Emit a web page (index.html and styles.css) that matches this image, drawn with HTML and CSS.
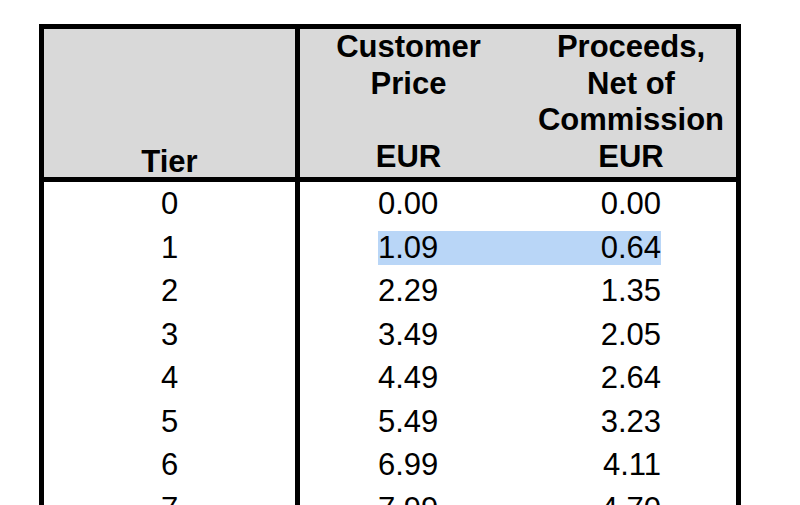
FILE: index.html
```html
<!DOCTYPE html>
<html>
<head>
<meta charset="utf-8">
<link rel="stylesheet" href="styles.css">
</head>
<body>
<div class="page">
<table class="tiers">
  <colgroup><col class="c1"><col class="c2"><col class="c3"></colgroup>
  <thead>
    <tr>
      <th class="tier-h">Tier</th>
      <th class="h2">Customer<br>Price<br><br>EUR</th>
      <th class="h3">Proceeds,<br>Net of<br>Commission<br>EUR</th>
    </tr>
  </thead>
  <tbody>
    <tr><td class="t">0</td><td class="p"><div class="v2">0.00</div></td><td class="n"><div class="v3">0.00</div></td></tr>
    <tr><td class="t">1</td><td class="p"><div class="v2 sel">1.09</div></td><td class="n"><div class="v3 sel">0.64</div></td></tr>
    <tr><td class="t">2</td><td class="p"><div class="v2">2.29</div></td><td class="n"><div class="v3">1.35</div></td></tr>
    <tr><td class="t">3</td><td class="p"><div class="v2">3.49</div></td><td class="n"><div class="v3">2.05</div></td></tr>
    <tr><td class="t">4</td><td class="p"><div class="v2">4.49</div></td><td class="n"><div class="v3">2.64</div></td></tr>
    <tr><td class="t">5</td><td class="p"><div class="v2">5.49</div></td><td class="n"><div class="v3">3.23</div></td></tr>
    <tr><td class="t">6</td><td class="p"><div class="v2">6.99</div></td><td class="n"><div class="v3">4.11</div></td></tr>
    <tr><td class="t">7</td><td class="p"><div class="v2">7.99</div></td><td class="n"><div class="v3">4.70</div></td></tr>
    <tr><td class="t">8</td><td class="p"><div class="v2">8.99</div></td><td class="n"><div class="v3">5.29</div></td></tr>
  </tbody>
</table>
</div>
</body>
</html>
```
FILE: styles.css
```css
html, body {
  margin: 0;
  padding: 0;
  background: #fff;
}
.page {
  height: 505px;
  overflow: hidden;
  padding: 24px 0 0 39px;
  box-sizing: border-box;
}
.tiers {
  border-collapse: separate;
  border-spacing: 0;
  border: 5px solid #000;
  border-bottom: none;
  font-family: "Liberation Sans", Arial, sans-serif;
  font-size: 31px;
  color: #000;
  table-layout: fixed;
  width: 702px;
}
.c1 { width: 256px; }
.c2 { width: 217px; }
.c3 { width: 219px; }
.tiers th {
  background: #d9d9d9;
  font-weight: bold;
  height: 146px;
  line-height: 36.5px;
  padding: 0 0 2px 0;
  vertical-align: bottom;
  text-align: center;
  border-bottom: 5px solid #000;
}
.tiers th.tier-h {
  line-height: 31px;
  padding-bottom: 0;
  border-right: 5px solid #000;
}
.tiers th.h3 {
  padding-left: 9px;
}
.tiers td {
  padding: 0;
  height: 43.5px;
  line-height: 43.5px;
  font-weight: normal;
}
.tiers td.t {
  text-align: center;
  border-right: 5px solid #000;
}
.v2 {
  padding: 5px 0 4.5px 78px;
  line-height: 34px;
  text-align: left;
}
.v3 {
  padding: 5px 75px 4.5px 0;
  line-height: 34px;
  text-align: right;
}
.sel {
  background: #b9d6f7;
  background-clip: content-box;
}
```
